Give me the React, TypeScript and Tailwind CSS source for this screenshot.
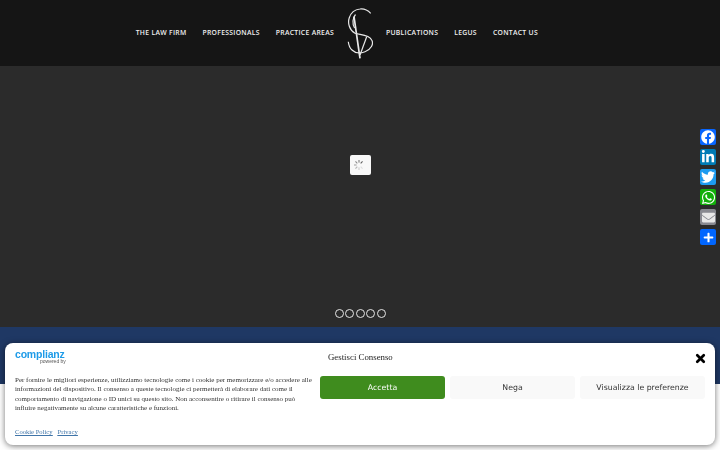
import { FaFacebook, FaLinkedinIn, FaTwitter, FaWhatsapp, FaEnvelope, FaPlus } from "react-icons/fa";
import { X } from "lucide-react";

const leftLinks = ["THE LAW FIRM", "PROFESSIONALS", "PRACTICE AREAS"];
const rightLinks = ["PUBLICATIONS", "LEGUS", "CONTACT US"];

const shareItems = [
  { name: "Facebook", color: "bg-[#0866ff] text-white", icon: <FaFacebook size={14} /> },
  { name: "LinkedIn", color: "bg-[#007bb5] text-white", icon: <FaLinkedinIn size={14} /> },
  { name: "Twitter", color: "bg-[#1d9bf0] text-white", icon: <FaTwitter size={14} /> },
  { name: "WhatsApp", color: "bg-[#12af0a] text-white", icon: <FaWhatsapp size={15} /> },
  { name: "Email", color: "bg-[#888990] text-[#e8e8e8]", icon: <FaEnvelope size={13} /> },
  { name: "Share", color: "bg-[#0166ff] text-white", icon: <FaPlus size={11} /> },
];

function Logo() {
  return (
    <svg width="26" height="52" viewBox="0 0 26 52" fill="none" stroke="#e8e8e8" strokeWidth="1.2" className="mx-[13px]">
      <path d="M23.7 6.3 C20 2.5 16 1.6 13 2 C7 2.6 3.6 6.5 2.2 11 C0.6 16 2.2 23 8 26.3 C13 28 22 27.5 24.7 33 C27 37 24 42.5 18 44.7 C13 46.6 8 46 5 43 C2.8 41 1.6 37.5 1.3 34.7" />
      <path d="M8.5 7.5 C5.6 11 5 17 7.6 21" />
      <path d="M7 9.7 L13 51.3" strokeWidth="1.7" />
      <path d="M19.7 29.7 L13 48" />
    </svg>
  );
}

function Header() {
  return (
    <header className="grid h-[66px] w-full grid-cols-[1fr_auto_1fr] items-center bg-[#151515] text-[6.8px] font-semibold tracking-[0.3px] text-[#f0f0f0] [font-family:'Open_Sans',sans-serif]">
      <nav className="flex items-center justify-end gap-[16px] pt-[1px]">
        {leftLinks.map((l) => (
          <a key={l} className="whitespace-nowrap">{l}</a>
        ))}
      </nav>
      <Logo />
      <nav className="flex items-center gap-[16px] pt-[1px]">
        {rightLinks.map((l) => (
          <a key={l} className="whitespace-nowrap">{l}</a>
        ))}
      </nav>
    </header>
  );
}

function Spinner() {
  const ticks = [0, 45, 90, 135, 180, 225, 270];
  return (
    <div className="flex h-5 w-[21px] items-center justify-center rounded-[2px] bg-[#f8f8f8]">
      <svg width="12" height="12" viewBox="0 0 12 12" className="mr-[3px]">
        {ticks.map((a, i) => (
          <line key={a} x1="6" y1="1" x2="6" y2="3.6" stroke="#444" strokeOpacity={0.15 + i * 0.12} strokeWidth="1" transform={`rotate(${a + 135} 6 6)`} />
        ))}
      </svg>
    </div>
  );
}

function Slider() {
  return (
    <section className="flex h-[261px] flex-col items-center bg-[#2b2b2b]">
      <div className="mt-[89px]">
        <Spinner />
      </div>
      <div className="mt-[134px] flex gap-[1.5px]">
        {[0, 1, 2, 3, 4].map((i) => (
          <span key={i} className="size-[9px] rounded-full border-[1.5px] border-[#e6e6e6]" />
        ))}
      </div>
    </section>
  );
}

function ShareBar() {
  return (
    <div className="fixed right-[4px] top-[129px] flex flex-col gap-[4px]">
      {shareItems.map((s) => (
        <a key={s.name} className={`flex size-4 items-center justify-center rounded-[2px] ${s.color}`}>
          {s.icon}
        </a>
      ))}
    </div>
  );
}

function CookieBanner() {
  return (
    <div className="fixed bottom-[5px] left-[5px] right-[5px] grid h-[102px] grid-cols-[305px_1fr] grid-rows-[33px_1fr] rounded-[8px] bg-white px-[10px] shadow-[0_1px_6px_rgba(0,0,0,0.55)]">
      <div className="flex flex-col pt-[6px] [font-family:'Liberation_Sans',sans-serif]">
        <span className="text-[10.5px] font-bold leading-[10px] tracking-[-0.2px] text-[#1e9be8]">complianz</span>
        <span className="ml-[25px] text-[5px] leading-[5px] text-[#555]">powered by</span>
      </div>
      <div className="flex items-center justify-between pb-[2px] pl-[8px]">
        <h2 className="mb-[2px] text-[8.8px] text-[#222] [font-family:'Liberation_Serif',serif]">Gestisci Consenso</h2>
        <X size={13} strokeWidth={5} className="mr-[-2px] text-black" />
      </div>
      <div className="flex flex-col text-[7px] leading-[9.3px] text-[#333] [font-family:'Liberation_Serif',serif]">
        <p className="w-[298px]">
          Per fornire le migliori esperienze, utilizziamo tecnologie come i cookie per memorizzare e/o accedere alle
          informazioni del dispositivo. Il consenso a queste tecnologie ci permetterà di elaborare dati come il
          comportamento di navigazione o ID unici su questo sito. Non acconsentire o ritirare il consenso può
          influire negativamente su alcune caratteristiche e funzioni.
        </p>
        <div className="mt-[14px] flex gap-[5px] text-[6.6px] text-[#3f74a8] underline">
          <a>Cookie Policy</a>
          <a>Privacy</a>
        </div>
      </div>
      <div className="flex h-[23px] gap-[5px] text-[7.8px] [font-family:'DejaVu_Sans',sans-serif]">
        <button className="flex-1 rounded-[3px] bg-[#3f8c1e] text-white">Accetta</button>
        <button className="flex-1 rounded-[3px] bg-[#f9f9f9] text-[#333]">Nega</button>
        <button className="flex-1 rounded-[3px] bg-[#f9f9f9] text-[#333]">Visualizza le preferenze</button>
      </div>
    </div>
  );
}

export default function App() {
  return (
    <div className="relative h-[450px] w-full overflow-hidden bg-white">
      <Header />
      <Slider />
      <div className="h-[57px] bg-[#1f3864]" />
      <ShareBar />
      <CookieBanner />
    </div>
  );
}
